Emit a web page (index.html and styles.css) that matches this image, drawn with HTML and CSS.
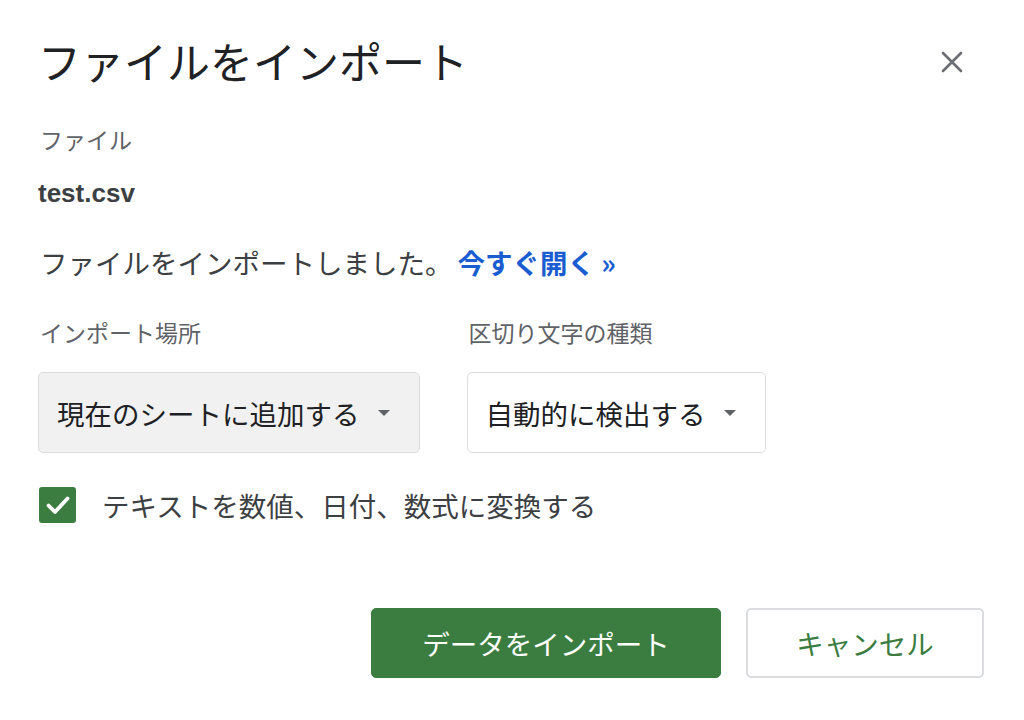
FILE: index.html
```html
<!DOCTYPE html>
<html lang="ja">
<head>
<meta charset="utf-8">
<link rel="stylesheet" href="styles.css">
</head>
<body>
<div class="dialog">
  <div class="header">
    <h1 class="title">ファイルをインポート</h1>
    <button class="close" aria-label="閉じる">
      <svg width="24" height="24" viewBox="0 0 24 24"><path d="M3 3 L21 21 M21 3 L3 21" stroke="#6b6e72" stroke-width="2.6" stroke-linecap="round" fill="none"/></svg>
    </button>
  </div>
  <div class="label label-file">ファイル</div>
  <div class="filename">test.csv</div>
  <div class="message">ファイルをインポートしました。<a class="link" href="#">今すぐ開く »</a></div>
  <div class="fields">
    <div class="field">
      <div class="label">インポート場所</div>
      <div class="select select-gray"><span>現在のシートに追加する</span><span class="arrow"></span></div>
    </div>
    <div class="field">
      <div class="label">区切り文字の種類</div>
      <div class="select"><span>自動的に検出する</span><span class="arrow"></span></div>
    </div>
  </div>
  <div class="check-row">
    <span class="checkbox">
      <svg width="30" height="30" viewBox="0 0 30 30"><path d="M5.5 15.5 L12 22 L24.5 8.5" stroke="#fff" stroke-width="3.8" fill="none" stroke-linecap="round" stroke-linejoin="round"/></svg>
    </span>
    <span class="check-label">テキストを数値、日付、数式に変換する</span>
  </div>
  <div class="actions">
    <button class="btn btn-primary">データをインポート</button>
    <button class="btn btn-secondary">キャンセル</button>
  </div>
</div>
</body>
</html>
```
FILE: styles.css
```css
html, body {
  margin: 0;
  padding: 0;
  background: #ffffff;
}
body {
  font-family: "Noto Sans CJK JP", "Noto Sans", sans-serif;
  color: #3c4043;
}
.dialog {
  width: 1024px;
  height: 720px;
  box-sizing: border-box;
  padding: 32px 40px 0 40px;
  display: flex;
  flex-direction: column;
}
.header {
  display: flex;
  align-items: center;
  justify-content: space-between;
  height: 56px;
}
.title {
  margin: 0;
  font-size: 43px;
  font-weight: 400;
  line-height: 56px;
  color: #202124;
  margin-left: -2px;
}
.close {
  border: none;
  background: none;
  padding: 0;
  width: 24px;
  height: 24px;
  margin-right: 20px;
  margin-top: 4px;
  display: flex;
}
.label {
  font-size: 23px;
  line-height: 30px;
  color: #5f6368;
}
.label-file {
  margin-top: 36px;
}
.filename {
  margin-top: 24px;
  font-family: "Liberation Sans", Arial, sans-serif;
  font-weight: 700;
  font-size: 26px;
  line-height: 30px;
  color: #3c4043;
  margin-left: -2px;
}
.message {
  margin-top: 36px;
  font-size: 27.5px;
  line-height: 36px;
  color: #3c4043;
}
.link {
  margin-left: 5px;
  color: #1a5dd0;
  font-weight: 700;
  text-decoration: none;
}
.fields {
  margin-top: 37px;
  display: flex;
  gap: 49px;
}
.field {
  display: flex;
  flex-direction: column;
  gap: 25px;
}
.select {
  display: flex;
  align-items: center;
  height: 81px;
  box-sizing: border-box;
  padding: 0 29px 0 18px;
  margin-left: -2px;
  border: 1px solid #dadce0;
  border-radius: 5px;
  background: #ffffff;
  font-size: 27.5px;
  color: #202124;
  gap: 18px;
  white-space: nowrap;
}
.select-gray {
  background: #f1f1f1;
}
.arrow {
  width: 0;
  height: 0;
  border-left: 6px solid transparent;
  border-right: 6px solid transparent;
  border-top: 6px solid #5f6368;
}
.check-row {
  margin-top: 34px;
  display: flex;
  align-items: center;
  gap: 26px;
}
.checkbox {
  width: 37px;
  height: 36px;
  margin-left: -1px;
  border-radius: 3px;
  background: #3b7d40;
  display: flex;
  align-items: center;
  justify-content: center;
}
.check-label {
  font-size: 27.5px;
  line-height: 36px;
  color: #3c4043;
}
.actions {
  margin-top: 85px;
  display: flex;
  justify-content: flex-end;
  gap: 25px;
}
.btn {
  height: 70px;
  box-sizing: border-box;
  padding: 0;
  border-radius: 5px;
  font-family: "Noto Sans CJK JP", "Noto Sans", sans-serif;
  font-size: 27.5px;
  white-space: nowrap;
}
.btn-primary {
  width: 350px;
  background: #3b7d40;
  color: #ffffff;
  border: 1px solid #3b7d40;
}
.btn-secondary {
  width: 238px;
  background: #ffffff;
  color: #3b7d40;
  border: 2px solid #dadce0;
}
```
